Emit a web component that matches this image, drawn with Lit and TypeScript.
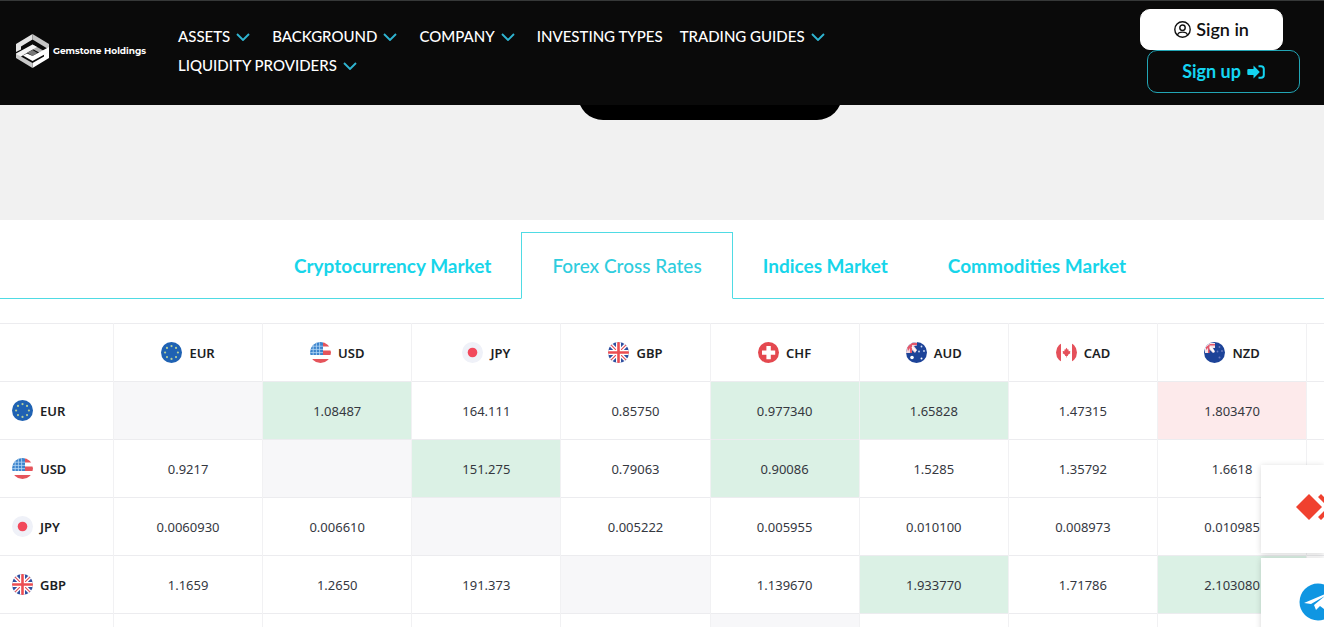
import { LitElement, html, css, svg, nothing } from "lit";
import { customElement, property, state } from "lit/decorators.js";
import { classMap } from "lit/directives/class-map.js";

const star = (x: number, y: number, r: number, fill: string) => svg`<circle cx=${x} cy=${y} r=${r} fill=${fill} />`;

const flags: Record<string, unknown> = {
  EUR: svg`<rect width="21" height="21" fill="#1f62b3" />
    ${[0, 45, 90, 135, 180, 225, 270, 315].map((a) =>
      star(10.5 + 6.4 * Math.cos((a * Math.PI) / 180), 10.5 + 6.4 * Math.sin((a * Math.PI) / 180), 1.1, "#b5cf9a")
    )}`,
  USD: svg`<rect width="21" height="21" fill="#fff" />
    <path d="M13 0h8v4.5h-8zM13 8.5h8v4.5H13zM0 17h21v4H0z" fill="#e5545b" />
    <rect width="13" height="13" fill="#3b83cc" />
    <path d="M0 4.2h13M0 7.4h13M0 10.6h13M3.2 0v13M6.4 0v13M9.6 0v13" stroke="#b5d8f5" stroke-width="0.8" />`,
  JPY: svg`<rect width="21" height="21" fill="#eff1f8" /><circle cx="10.5" cy="10.5" r="4.8" fill="#f2495c" />`,
  GBP: svg`<rect width="21" height="21" fill="#2f4fa0" />
    <path d="M0 0l21 21M21 0L0 21" stroke="#fff" stroke-width="4" />
    <path d="M0 0l21 21M21 0L0 21" stroke="#e4525c" stroke-width="1.2" />
    <path d="M10.5 0v21M0 10.5h21" stroke="#fff" stroke-width="5" />
    <path d="M10.5 0v21M0 10.5h21" stroke="#ec4d52" stroke-width="2.6" />`,
  CHF: svg`<rect width="21" height="21" fill="#e4484f" />
    <path d="M8.4 4h4.4v4.4h4.4v4.4h-4.4v4.4H8.4v-4.4H4V8.4h4.4z" fill="#fff" />`,
  AUD: svg`<rect width="21" height="21" fill="#1d4398" />
    <path d="M0 0h11v3.5L8 4l3 4-2 3-4-4-1 4H0z" fill="#f2d5dd" />
    <path d="M1 5L6 1h5v2H6v8H4V6L2 9z" fill="#e4576a" />
    <path d="M6 5l4 4" stroke="#fff" stroke-width="1.6" />
    ${star(6, 15.5, 1.8, "#fff")}${star(15.5, 4.5, 0.9, "#cfdcf5")}${star(18, 9, 0.9, "#cfdcf5")}
    ${star(13, 9.5, 0.9, "#cfdcf5")}${star(15.5, 16.5, 1, "#fff")}`,
  CAD: svg`<rect width="21" height="21" fill="#fff" />
    <path d="M0 0h5v21H0zM16 0h5v21h-5z" fill="#e5505a" />
    <path d="M10.5 5.8l1.3 2 .9-.3-.2 1.8 1.900-.3-.5 1.500.7.5-2.800 1.900.2 1h-1.200v1.700h-.6v-1.700H9l.2-1-2.800-1.900.7-.5-.5-1.500 1.900.3-.2-1.800.9.3z" fill="#e5505a" />`,
  NZD: svg`<rect width="21" height="21" fill="#1d4398" />
    <path d="M1 1h10v5L9 6l2 4-2 1-4-4v4H1z" fill="#f4e4ea" />
    <path d="M2 5l4-3h5v1.5H5.5V11H4V6L2 8z" fill="#e4576a" />
    <path d="M6 5l4 4.5" stroke="#fff" stroke-width="1.6" />
    ${star(15.5, 5, 0.9, "#6b7cc0")}${star(18, 9, 0.9, "#6b7cc0")}${star(13.5, 9.5, 0.9, "#6b7cc0")}
    ${star(15.5, 15.5, 1, "#6b7cc0")}`,
};

@customElement("currency-label")
export class CurrencyLabel extends LitElement {
  static styles = css`
    :host { display: inline-flex; align-items: center; gap: 7px; vertical-align: middle; }
    .flag { display: block; width: 21px; height: 21px; border-radius: 50%; }
  `;
  @property() code = "";
  render() {
    return html`<svg class="flag" viewBox="0 0 21 21" aria-hidden="true">${flags[this.code]}</svg><span>${this.code}</span>`;
  }
}

type Cell = [value: string, tone?: "up" | "down" | "self"];
const self: Cell = ["", "self"];

@customElement("rates-table")
export class RatesTable extends LitElement {
  static styles = css`
    :host { display: block; overflow: hidden; }
    .rates {
      width: 110%;
      table-layout: fixed;
      border-collapse: collapse;
      font: 13px/20px "Trebuchet MS", "Noto Sans", sans-serif;
      color: #35383f;
    }
    .first { width: 113px; }
    th, td {
      height: 57px;
      padding: 0;
      border-top: 1px solid #ececef;
      border-right: 1px solid #f1f1f3;
      text-align: center;
    }
    th { font-weight: 600; color: #1c1e24; }
    .row-head { text-align: left; padding-left: 12px; }
    .up { background: #dbf1e5; }
    .down { background: #fdeaeb; }
    .self { background: #f7f7f9; }
  `;

  private codes = ["EUR", "USD", "JPY", "GBP", "CHF", "AUD", "CAD", "NZD"];
  private rows: { code: string; cells: Cell[] }[] = [
    { code: "EUR", cells: [self, ["1.08487", "up"], ["164.111"], ["0.85750"], ["0.977340", "up"], ["1.65828", "up"], ["1.47315"], ["1.803470", "down"]] },
    { code: "USD", cells: [["0.9217"], self, ["151.275", "up"], ["0.79063"], ["0.90086", "up"], ["1.5285"], ["1.35792"], ["1.6618"]] },
    { code: "JPY", cells: [["0.0060930"], ["0.006610"], self, ["0.005222"], ["0.005955"], ["0.010100"], ["0.008973"], ["0.010985"]] },
    { code: "GBP", cells: [["1.1659"], ["1.2650"], ["191.373"], self, ["1.139670"], ["1.933770", "up"], ["1.71786"], ["2.103080", "up"]] },
    { code: "", cells: [[""], [""], [""], [""], self, [""], [""], [""]] },
  ];

  render() {
    return html`<table class="rates" aria-label="Forex cross rates">
      <thead>
        <tr>
          <td class="first"></td>
          ${this.codes.map((c) => html`<th scope="col"><currency-label code=${c}></currency-label></th>`)}
          <td></td>
        </tr>
      </thead>
      <tbody>
        ${this.rows.map(
          (r) => html`<tr>
            <th class="row-head" scope="row">${r.code ? html`<currency-label code=${r.code}></currency-label>` : nothing}</th>
            ${r.cells.map(([value, tone]) => html`<td class=${tone ?? ""}>${value}</td>`)}
            <td></td>
          </tr>`
        )}
      </tbody>
    </table>`;
  }
}

@customElement("site-header")
export class SiteHeader extends LitElement {
  static styles = css`
    :host { display: block; }
    .bar {
      box-sizing: border-box;
      display: flex;
      align-items: flex-start;
      min-height: 105px;
      padding: 8px 24px 0 16px;
      border-top: 1px solid #363838;
      background: #0a0a0a;
      color: #fff;
    }
    .brand {
      display: flex;
      align-items: center;
      gap: 4px;
      flex: none;
      width: 162px;
      padding-top: 25px;
      color: #fff;
      text-decoration: none;
      font: bold 9px/12px "Montserrat", "DejaVu Sans", sans-serif;
      white-space: nowrap;
    }
    .mark { width: 33px; height: 34px; flex: none; }
    .nav { width: 62%; }
    .menu {
      display: flex;
      flex-wrap: wrap;
      column-gap: 17px;
      margin: 0;
      padding: 13px 0 0;
      list-style: none;
    }
    .link {
      display: flex;
      align-items: center;
      gap: 6px;
      color: #fff;
      text-decoration: none;
      font: 500 15px/29px Lato, sans-serif;
      white-space: nowrap;
    }
    .parent { padding-right: 5px; }
    .chevron { width: 14px; height: 8px; }
    .actions {
      display: flex;
      flex-direction: column;
      margin-left: auto;
      align-items: flex-start;
    }
    .btn {
      box-sizing: border-box;
      display: flex;
      align-items: center;
      justify-content: center;
      border: 1px solid #fff;
      border-radius: 10px;
      font: bold 18px/23px Lato, sans-serif;
      white-space: nowrap;
      text-decoration: none;
    }
    .sign-in { gap: 5px; padding: 8px 33px; background: #fff; color: #111; font-weight: 600; }
    .sign-up { gap: 6px; margin-left: 7px; padding: 9px 34px; border-color: #22a5b5; color: #14d5f2; }
    .user { width: 17px; height: 17px; }
    .enter { width: 18px; height: 14px; }
  `;

  private links: [string, boolean][] = [
    ["ASSETS", true],
    ["BACKGROUND", true],
    ["COMPANY", true],
    ["INVESTING TYPES", false],
    ["TRADING GUIDES", true],
    ["LIQUIDITY PROVIDERS", true],
  ];

  render() {
    return html`<header class="bar">
      <a class="brand" href="#">
        <svg class="mark" viewBox="0 0 33 34" aria-hidden="true" fill="none">
          <path d="M0 10L16.500 0v5.500L5 12.500v3L0 18z" fill="#e4e4e4" />
          <path d="M16.500 0L33 10v5.500L16.500 5.500z" fill="#c4c4c4" />
          <path d="M16.500 10.500L22 13.500l6 3.500 5-3v4l-5 3-11.500-6z" fill="#b0b0b0" />
          <path d="M0 19.500L16.500 10.500 21 13 5 22.500v2L0 22z" fill="#f4f4f4" />
          <path d="M11 18.500l5.500 3.500 5-3-5-3z" fill="#777" />
          <path d="M11 19.500l5.500 2.500L33 13v5L16.500 27 7 21.500z" fill="#fff" />
          <path d="M33 17.500V24L16.500 34v-5L28 22.500v-2z" fill="#fff" />
          <path d="M0 20l5 2.500L16.500 29v5L0 24z" fill="#c9c9c9" />
        </svg>
        <span>Gemstone Holdings</span>
      </a>
      <nav class="nav" aria-label="Main">
        <ul class="menu">
          ${this.links.map(
            ([label, parent]) => html`<li>
              <a class=${classMap({ link: true, parent })} href="#">${label}${parent
                ? html`<svg class="chevron" viewBox="0 0 14 8" aria-hidden="true"><path d="M1 1l6 6 6-6" fill="none" stroke="#2fb4d0" stroke-width="1.900" /></svg>`
                : nothing}</a>
            </li>`
          )}
        </ul>
      </nav>
      <div class="actions">
        <a class="btn sign-in" href="#">
          <svg class="user" viewBox="0 0 17 17" fill="none" stroke="#111" stroke-width="1.400" aria-hidden="true">
            <circle cx="8.500" cy="8.500" r="7.700" /><circle cx="8.500" cy="6.700" r="2.700" />
            <path d="M3.500 14c.6-2.300 2-2.900 5-2.900s4.400.6 5 2.900" />
          </svg>Sign in</a>
        <a class="btn sign-up" href="#">Sign up
          <svg class="enter" viewBox="0 0 18 14" aria-hidden="true">
            <path d="M6.500 .5L12.800 7 6.500 13.500V10H1.300a1 1 0 0 1-1-1V5a1 1 0 0 1 1-1h5.200z" fill="#14d5f2" />
            <path d="M11.500 1.200H14a2.800 2.800 0 0 1 2.800 2.800v6a2.800 2.800 0 0 1-2.800 2.800h-2.500" fill="none" stroke="#14d5f2" stroke-width="2" />
          </svg></a>
      </div>
    </header>`;
  }
}

@customElement("app-root")
export class AppRoot extends LitElement {
  static styles = css`
    :host { display: block; position: relative; height: 100vh; overflow: hidden; background: #fff; }
    .band { height: 115px; overflow: hidden; padding-left: 96px; background: #f1f1f1; }
    .pill { width: 264px; height: 50px; margin: -35px auto 0; border-radius: 25px; background: #000; }
    .tabs {
      display: flex;
      justify-content: center;
      margin-bottom: 24px;
      padding: 12px 0 0 96px;
      border-bottom: 1px solid #4fdbe4;
    }
    .tab {
      margin: 0 0 -1px;
      padding: 20px 30px 19px;
      border: 0;
      background: none;
      color: #17d5ea;
      font: bold 19px/28px Lato, sans-serif;
      white-space: nowrap;
    }
    .active {
      padding: 19px 30px 18px;
      border: 1px solid #4fdbe4;
      border-bottom-color: #fff;
      background: #fff;
      color: #2fcdde;
      font-weight: 500;
    }
    .dock {
      position: absolute;
      top: 465px;
      right: 0;
      display: grid;
      gap: 5px;
      width: 63px;
    }
    .tool {
      height: 88px;
      padding: 0 0 0 34px;
      border: 0;
      background: #fff;
      box-shadow: 0 1px 6px rgba(0, 0, 0, 0.16);
      overflow: hidden;
      text-align: left;
    }
    .logo { display: block; width: 48px; height: 40px; }
  `;

  @state() private active = 1;
  private tabs = ["Cryptocurrency Market", "Forex Cross Rates", "Indices Market", "Commodities Market"];

  render() {
    return html`
      <site-header></site-header>
      <div class="band"><div class="pill"></div></div>
      <div class="tabs" role="tablist">
        ${this.tabs.map(
          (t, i) => html`<button
            class=${classMap({ tab: true, active: i === this.active })}
            role="tab"
            aria-selected=${i === this.active}
            @click=${() => (this.active = i)}
          >${t}</button>`
        )}
      </div>
      <rates-table></rates-table>
      <div class="dock">
        <button class="tool" aria-label="AnyDesk">
          <svg class="logo" viewBox="0 0 48 40" aria-hidden="true">
            <path d="M1 18L14 5l13 13-13 13z" fill="#f0412f" />
            <path d="M23 8l3-3 13 13-13 13-3-3 10-10z" fill="#f0412f" />
          </svg>
        </button>
        <button class="tool" aria-label="Telegram">
          <svg class="logo" viewBox="0 0 48 40" aria-hidden="true">
            <circle cx="23" cy="20" r="18.500" fill="#0f96e2" />
            <path d="M9 21l28-12-4 21-8-6-4 4-2-5 11-9-14 8z" fill="#fff" />
          </svg>
        </button>
      </div>
    `;
  }
}
